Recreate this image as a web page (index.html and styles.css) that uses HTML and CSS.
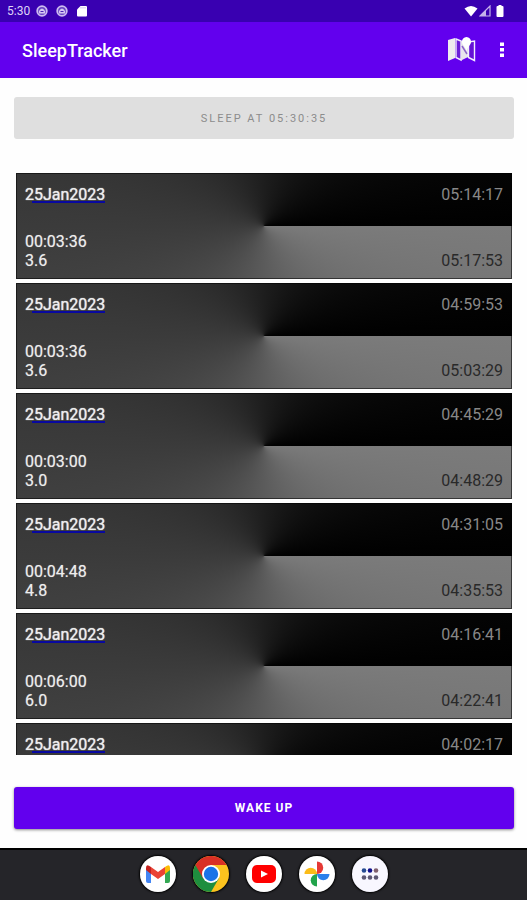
FILE: index.html
```html
<!DOCTYPE html>
<html lang="en">
<head>
<meta charset="utf-8">
<meta name="viewport" content="width=device-width, initial-scale=1">
<title>SleepTracker</title>
<link rel="stylesheet" href="styles.css">
</head>
<body>
<div class="status">
  <span class="clock">5:30</span>
  <svg width="12" height="12" viewBox="0 0 12 12"><circle cx="6" cy="6" r="4.800" fill="#6a45c4" stroke="#cdbcf0" stroke-width="1.800"/><path d="M3 6Q6 1 9 6V8.500H3Z" fill="#d6c8f3"/><path d="M4.500 6.500H7.500" stroke="#4b22b4"/></svg>
  <svg width="12" height="12" viewBox="0 0 12 12"><circle cx="6" cy="6" r="4.800" fill="#6a45c4" stroke="#cdbcf0" stroke-width="1.800"/><path d="M3 6Q6 1 9 6V8.500H3Z" fill="#d6c8f3"/><path d="M4.500 6.500H7.500" stroke="#4b22b4"/></svg>
  <svg width="12" height="12" viewBox="0 0 12 12"><path d="M4.500 1H10Q11 1 11 2V10.500Q11 11.500 10 11.500H2Q1 11.500 1 10.500V4.500Z" fill="#fff"/><path d="M5 2V3.500M7 2V3.500M9 2V3.500" stroke="#b9a3e6" stroke-width=".8"/></svg>
  <span class="signals">
    <svg width="14" height="12" viewBox="0 0 14 12"><path d="M.5 3.500Q7-1.500 13.500 3.500L7 11.500Z" fill="#fff"/></svg>
    <svg width="12" height="12" viewBox="0 0 12 12"><path d="M1 11L11 1V11Z" fill="none" stroke="#c5b2eb" stroke-width="1.200"/><path d="M1 11L7 5V11Z" fill="#c5b2eb"/></svg>
    <svg class="battery" width="8" height="12" viewBox="0 0 8 12"><path d="M2.500 0H5.500V1H6.500Q7.500 1 7.500 2V11Q7.500 12 6.500 12H1.500Q.5 12 .5 11V2Q.5 1 1.500 1H2.500Z" fill="#fff"/></svg>
  </span>
</div>
<header class="appbar">
  <h1>SleepTracker</h1>
  <button class="icon" aria-label="Map"><svg width="30" height="26" viewBox="0 0 30 26"><path d="M1 3L8 1V21L1 24Z" fill="#eee"/><path d="M9 2L14 4V23L9 20.500Z" fill="#6a1fd8" stroke="#f2edff" stroke-width="1.400"/><path d="M14 4L21 2V20L14 23.500Z" fill="#e8e5ec"/><path d="M15 9L20 17" stroke="#8b63c9" stroke-width="1.500"/><path d="M21.500 5L27.500 4V23.500L21.500 20.500Z" fill="#6511d6" stroke="#f2edff" stroke-width="1.400"/><path d="M19.500 0A4.700 4.700 0 0 0 15 5C15 8 18 9 19.500 14C21 9 24 8 24 5A4.700 4.700 0 0 0 19.500 0Z" fill="#fff"/></svg></button>
  <button class="icon" aria-label="More options"><svg width="6" height="16" viewBox="0 0 6 16"><path d="M1 .5H5V4H1ZM1 6H5V9.500H1ZM1 11.500H5V15H1Z" fill="#fff"/></svg></button>
</header>
<main>
  <button class="action" disabled>SLEEP AT 05:30:35</button>
  <ul class="list">
    <li><span class="date">25Jan2023</span><span class="start">05:14:17</span><span class="length">00:03:36<br>3.6</span><span class="end">05:17:53</span></li>
    <li><span class="date">25Jan2023</span><span class="start">04:59:53</span><span class="length">00:03:36<br>3.6</span><span class="end">05:03:29</span></li>
    <li><span class="date">25Jan2023</span><span class="start">04:45:29</span><span class="length">00:03:00<br>3.0</span><span class="end">04:48:29</span></li>
    <li><span class="date">25Jan2023</span><span class="start">04:31:05</span><span class="length">00:04:48<br>4.8</span><span class="end">04:35:53</span></li>
    <li><span class="date">25Jan2023</span><span class="start">04:16:41</span><span class="length">00:06:00<br>6.0</span><span class="end">04:22:41</span></li>
    <li><span class="date">25Jan2023</span><span class="start">04:02:17</span></li>
  </ul>
  <button class="action wake">WAKE UP</button>
</main>
<nav class="dock">
  <button aria-label="Gmail"><svg viewBox="0 0 36 36"><circle cx="18" cy="18" r="18" fill="#fff"/><path d="M6 12L11 16V27H8Q6 27 6 25Z" fill="#4285f4"/><path d="M25 16L30 12V25Q30 27 28 27H25Z" fill="#34a853"/><path d="M25 11Q30 7 30 12V14L25 18Z" fill="#fbbc04"/><path d="M11 11L18 16L25 11V18L18 23L11 18Z" fill="#ea4335"/><path d="M6 14V12Q6 7 11 11V18Z" fill="#c5221f"/></svg></button>
  <button aria-label="Chrome"><svg viewBox="0 0 36 36"><circle cx="18" cy="18" r="18" fill="#fcc31e"/><path d="M18 18L2.400 9A18 18 0 0 0 18 36L25.800 22.500Z" fill="#1e8e3e"/><path d="M18 9H33.600A18 18 0 0 0 2.400 9L10.200 22.500L18 18Z" fill="#d93025"/><circle cx="18" cy="18" r="9" fill="#fff"/><circle cx="18" cy="18" r="7.200" fill="#1a73e8"/></svg></button>
  <button aria-label="YouTube"><svg viewBox="0 0 36 36"><circle cx="18" cy="18" r="18" fill="#fff"/><rect x="6" y="9" width="24" height="18" rx="5" fill="#f00"/><path d="M15 14.500L22 18L15 21.500Z" fill="#fff"/></svg></button>
  <button aria-label="Photos"><svg viewBox="0 0 36 36"><circle cx="18" cy="18" r="18" fill="#fff"/><path d="M18 5.500A6.200 6.200 0 0 1 18 18Z" fill="#e53935"/><path d="M30.500 18A6.200 6.200 0 0 1 18 18Z" fill="#2a80eb"/><path d="M18 30.500A6.200 6.200 0 0 1 18 18Z" fill="#22a44b"/><path d="M5.500 18A6.200 6.200 0 0 1 18 18Z" fill="#fbbc18"/></svg></button>
  <button aria-label="All apps"><svg viewBox="0 0 36 36"><circle cx="18" cy="18" r="18" fill="#f8f7ff"/><g fill="#5d5874"><circle cx="12" cy="14.500" r="2.300" fill="#254a92"/><circle cx="18" cy="14.500" r="2.300" fill="#10108c"/><circle cx="24" cy="14.500" r="2.300" fill="#80616f"/><circle cx="12" cy="21.500" r="2.300"/><circle cx="18" cy="21.500" r="2.300"/><circle cx="24" cy="21.500" r="2.300"/></g></svg></button>
</nav>
</body>
</html>
```
FILE: styles.css
```css
* { box-sizing: border-box; }
body {
  margin: 0;
  height: 100vh;
  display: flex;
  flex-direction: column;
  background: #fefefe;
  font-family: Roboto, "Liberation Sans", sans-serif;
}
button { border: 0; padding: 0; background: none; font: inherit; }
svg { display: block; }
.status {
  height: 22px;
  flex: none;
  display: flex;
  align-items: center;
  gap: 8px;
  padding: 0 23px 0 7px;
  background: #3900b1;
  color: #dfd4f7;
  font-size: 12px;
}
.clock { margin-right: -2px; }
.signals { display: flex; gap: 1px; margin-left: auto; }
.battery { margin-left: 4px; }
.appbar {
  height: 56px;
  flex: none;
  display: flex;
  align-items: center;
  gap: 22px;
  padding: 0 22px;
  background: #6200ee;
  color: #fff;
}
h1 { flex: 1; margin: 0; font-size: 18px; font-weight: 500; }
main {
  flex: 1;
  min-height: 0;
  display: flex;
  flex-direction: column;
  padding: 19px 13px 19px 14px;
}
.action {
  height: 42px;
  flex: none;
  border-radius: 3px;
  background: #dfdfdf;
  color: #8c8c8c;
  font-size: 11px;
  font-weight: 400;
  letter-spacing: 2px;
}
.wake {
  background: #6200ee;
  color: #fff;
  font-size: 12px;
  font-weight: 700;
  letter-spacing: 1px;
  box-shadow: 0 1px 3px #0007;
}
.list {
  flex: 1;
  min-height: 0;
  overflow: hidden;
  display: flex;
  flex-direction: column;
  gap: 4px;
  list-style: none;
  margin: 34px 2px 32px;
  padding: 0;
}
li {
  min-height: 106px;
  flex: none;
  display: grid;
  grid-template-columns: 1fr auto;
  align-content: space-between;
  align-items: end;
  padding: 11px 8px 8px;
  border: 1px solid #0008;
  background: conic-gradient(from 90deg, #7b7b7b, #3b3b3b 50%, #000) border-box;
  color: #eee;
  font-size: 16px;
  line-height: 19px;
}
.date {
  justify-self: start;
  background: linear-gradient(#0808a0, #0808a0) 7px 16px / 100% 2px no-repeat;
  text-shadow: 0 0 1px #eee;
}
.length { text-shadow: 0 0 1px #eee8; }
.start { color: #888; }
.end { color: #292929; }
.dock {
  height: 52px;
  flex: none;
  display: flex;
  justify-content: center;
  align-items: center;
  gap: 17px;
  padding-bottom: 2px;
  border-top: 2px solid #000;
  background: #252529;
}
.dock button { width: 36px; height: 36px; border-radius: 50%; box-shadow: 0 0 2px 1px #000; }
```
